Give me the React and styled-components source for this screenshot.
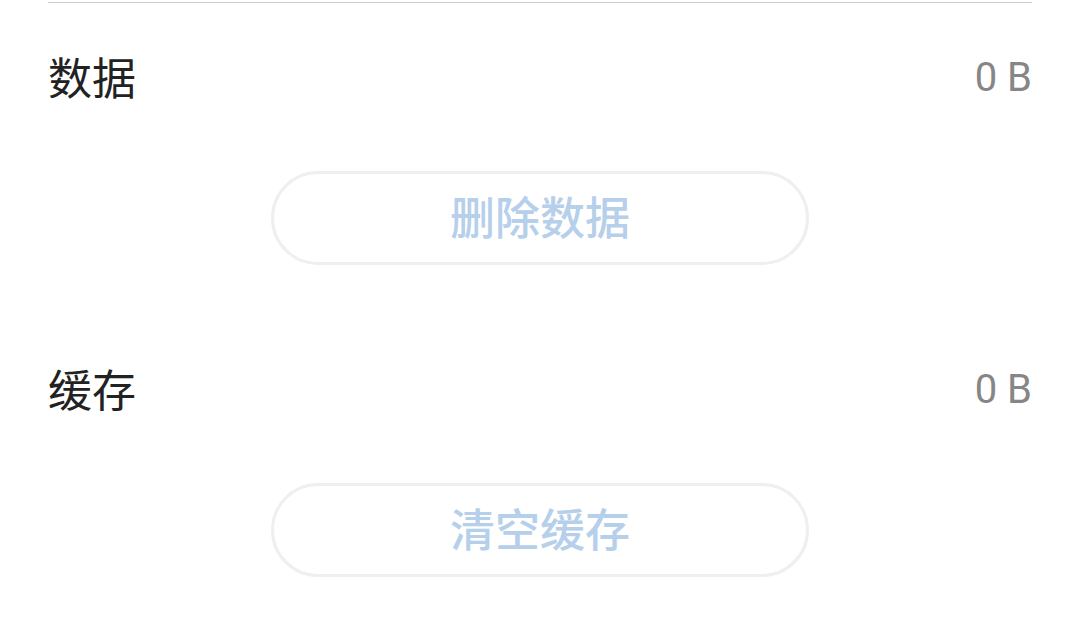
import React from "react";
import styled, { createGlobalStyle } from "styled-components";

const Global = createGlobalStyle`
  html, body { margin: 0; padding: 0; background: #ffffff; }
  body { font-family: Roboto, "Noto Sans CJK SC", sans-serif; }
`;

const Page = styled.div`
  width: 1080px;
  height: 636px;
  overflow: hidden;
  box-sizing: border-box;
  padding: 2px 48px 0;
  display: flex;
  flex-direction: column;
`;

const Divider = styled.div`
  height: 1px;
  background: #cccccc;
`;

const Row = styled.div`
  height: 150px;
  box-sizing: border-box;
  padding-bottom: 4px;
  display: flex;
  align-items: center;
  justify-content: space-between;
`;

const Label = styled.span`
  font-family: "Noto Sans CJK SC", sans-serif;
  font-size: 44px;
  line-height: 1;
  color: #222222;
`;

const Value = styled.span`
  font-family: Roboto, sans-serif;
  font-size: 40px;
  line-height: 1;
  margin-top: 4px;
  color: #868686;
`;

const ActionButton = styled.button`
  align-self: center;
  box-sizing: border-box;
  width: 538px;
  height: 94px;
  margin: 18px 0 ${(p) => (p.$last ? 0 : 50)}px;
  border: 3px solid #efefef;
  border-radius: 47px;
  background: #ffffff;
  font-family: "Noto Sans CJK SC", sans-serif;
  font-weight: 500;
  font-size: 45px;
  line-height: 1;
  color: #b6cfea;
  padding: 0 0 6px;
  display: flex;
  align-items: center;
  justify-content: center;
`;

const items = [
  { label: "数据", value: "0 B", action: "删除数据" },
  { label: "缓存", value: "0 B", action: "清空缓存" },
];

export default function App() {
  return (
    <>
      <Global />
      <Page>
        <Divider />
        {items.map((it, i) => (
          <React.Fragment key={it.label}>
            <Row>
              <Label>{it.label}</Label>
              <Value>{it.value}</Value>
            </Row>
            <ActionButton $last={i === items.length - 1}>{it.action}</ActionButton>
          </React.Fragment>
        ))}
      </Page>
    </>
  );
}
